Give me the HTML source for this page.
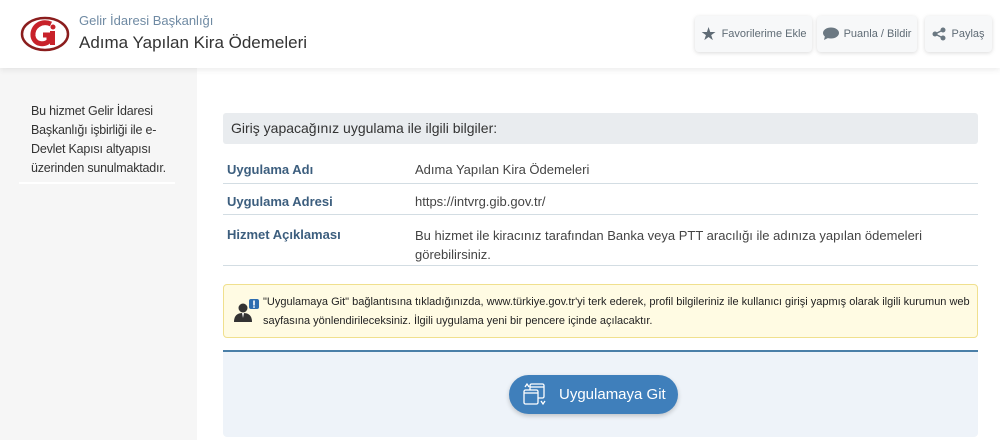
<!DOCTYPE html>
<html><head><meta charset="utf-8"><style>
*{box-sizing:border-box;margin:0;padding:0}
body{width:1000px;height:440px;overflow:hidden;background:#fff;font-family:"Liberation Sans",sans-serif;position:relative;color:#333}
.hdr{position:absolute;left:0;top:0;width:1000px;height:68px;background:#fff;box-shadow:0 2px 6px rgba(0,0,0,.08);z-index:2}
.side{position:absolute;left:0;top:68px;width:197px;height:372px;background:#f6f6f6}
.abs{position:absolute}
.btn{position:absolute;top:16px;height:36px;background:#f7f8f9;border-radius:4px;box-shadow:0 1px 4px rgba(0,0,0,.15);font-size:11px;color:#5f6b75;display:flex;align-items:center;justify-content:center;gap:5px}
.row{position:absolute;left:223px;width:755px;border-bottom:1px solid #d3dde3;font-size:13px}
.lbl{position:absolute;left:4px;color:#3c5e7e;font-weight:bold}
.val{position:absolute;left:192px;color:#444}
</style></head><body>
<div class="hdr">
<svg class="abs" style="left:20px;top:16px" width="50" height="36" viewBox="0 0 50 36"><ellipse cx="25" cy="18" rx="23" ry="16" fill="none" stroke="#8b1d1d" stroke-width="2.5"/><path d="M31 8 C22 4 12 10 13 20 C14 28 24 30 29 25 L29 19 L23 19" fill="none" stroke="#c8222a" stroke-width="5"/><circle cx="33" cy="11" r="2.5" fill="#c8222a"/><rect x="30" y="15" width="5" height="14" fill="#c8222a"/></svg>
<div class="abs" style="left:79px;top:13px;font-size:13px;color:#6f8aa3">Gelir İdaresi Başkanlığı</div>
<div class="abs" style="left:79px;top:33px;font-size:17px;color:#333">Adıma Yapılan Kira Ödemeleri</div>
<div class="btn" style="left:695px;width:117px"><span style="color:#5f6b75;font-size:18px;line-height:14px">★</span>Favorilerime Ekle</div>
<div class="btn" style="left:817px;width:100px"><svg width="16" height="14" viewBox="0 0 16 14"><ellipse cx="8" cy="6" rx="8" ry="5.5" fill="#6b7882"/><path d="M2 9 L1 13 L6 10.5Z" fill="#6b7882"/></svg>Puanla / Bildir</div>
<div class="btn" style="left:925px;width:67px"><svg width="14" height="14" viewBox="0 0 14 14"><circle cx="11" cy="3" r="2.5" fill="#6b7882"/><circle cx="3" cy="7" r="2.5" fill="#6b7882"/><circle cx="11" cy="11" r="2.5" fill="#6b7882"/><path d="M3 7 L11 3 M3 7 L11 11" stroke="#6b7882" stroke-width="1.5"/></svg>Paylaş</div>
</div>
<div class="side"></div>
<div class="abs" style="left:31px;top:102px;width:165px;font-size:12.5px;line-height:19px;color:#333;letter-spacing:-0.2px">Bu hizmet Gelir İdaresi<br>Başkanlığı işbirliği ile e-<br>Devlet Kapısı altyapısı<br>üzerinden sunulmaktadır.</div>
<div class="abs" style="left:19px;top:182px;width:156px;height:2px;background:#fff"></div>

<div class="abs" style="left:223px;top:113px;width:755px;height:31px;background:#e9ecef;border-radius:3px;font-size:14px;padding:7px 8px;color:#333">Giriş yapacağınız uygulama ile ilgili bilgiler:</div>
<div class="row" style="top:152px;height:32px"><span class="lbl" style="top:10px">Uygulama Adı</span><span class="val" style="top:10px">Adıma Yapılan Kira Ödemeleri</span></div>
<div class="row" style="top:184px;height:31px"><span class="lbl" style="top:10px">Uygulama Adresi</span><span class="val" style="top:10px">https://intvrg.gib.gov.tr/</span></div>
<div class="row" style="top:215px;height:51px"><span class="lbl" style="top:12px">Hizmet Açıklaması</span><span class="val" style="top:11px;line-height:19px;width:540px">Bu hizmet ile kiracınız tarafından Banka veya PTT aracılığı ile adınıza yapılan ödemeleri görebilirsiniz.</span></div>

<div class="abs" style="left:223px;top:284px;width:755px;height:54px;background:#fffbe3;border:1px solid #f0e08e;border-radius:4px"></div>
<svg class="abs" style="left:233px;top:298px" width="28" height="26" viewBox="0 0 28 26"><circle cx="10" cy="10" r="4.5" fill="#333"/><path d="M1 24 C1 17 5 15 10 15 C15 15 19 17 19 24Z" fill="#333"/><path d="M9 15 L10 20 L11 15Z" fill="#fff"/><rect x="16" y="1" width="10" height="10" rx="2" fill="#2e6db0"/><rect x="20.2" y="2.5" width="1.6" height="5" fill="#fff"/><rect x="20.2" y="8.3" width="1.6" height="1.5" fill="#fff"/></svg>
<div class="abs" style="left:263px;top:293px;width:710px;font-size:11px;line-height:19px;color:#222">"Uygulamaya Git" bağlantısına tıkladığınızda, www.türkiye.gov.tr'yi terk ederek, profil bilgileriniz ile kullanıcı girişi yapmış olarak ilgili kurumun web sayfasına yönlendirileceksiniz. İlgili uygulama yeni bir pencere içinde açılacaktır.</div>

<div class="abs" style="left:223px;top:350px;width:755px;height:2px;background:#4a7fa8"></div>
<div class="abs" style="left:223px;top:352px;width:755px;height:85px;background:#eef3f9;border-radius:0 0 4px 4px"></div>
<div class="abs" style="left:509px;top:375px;width:169px;height:39px;background:#3f7fbb;border-radius:20px;box-shadow:0 2px 5px rgba(0,0,0,.2);color:#fff;font-size:15px;display:flex;align-items:center;padding-left:50px">Uygulamaya Git</div>
<svg class="abs" style="left:522px;top:382px" width="26" height="25" viewBox="0 0 26 25" fill="none" stroke="#fff" stroke-width="1.3"><rect x="8" y="2" width="14" height="14" rx="1.5"/><path d="M8 5h14"/><rect x="2" y="8" width="14" height="14" rx="1.5" fill="#3f7fbb"/><path d="M2 11h14"/><path d="M3 5 L5 2 L7 5"/><path d="M19 19 L21 22 L23 19"/></svg>
</body></html>
